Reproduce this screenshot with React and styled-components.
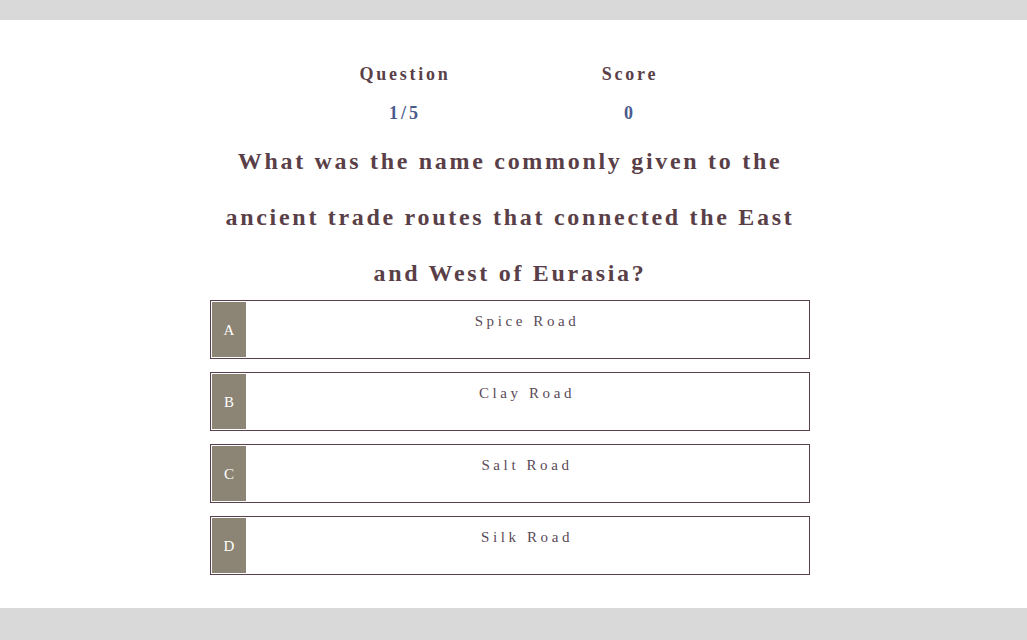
import styled, { createGlobalStyle } from "styled-components";

const questions = [
  {
    text: "What was the name commonly given to the ancient trade routes that connected the East and West of Eurasia?",
    options: ["Spice Road", "Clay Road", "Salt Road", "Silk Road"],
  },
];

const letters = ["A", "B", "C", "D"];

const App = () => {
  const current = questions[0];

  return (
    <>
      <GlobalStyle />
      <Page>
        <Panel>
          <Stats>
            <Stat>
              <StatLabel>Question</StatLabel>
              <StatValue>1/5</StatValue>
            </Stat>
            <Stat>
              <StatLabel>Score</StatLabel>
              <StatValue>0</StatValue>
            </Stat>
          </Stats>
          <Question>{current.text}</Question>
          <Options>
            {current.options.map((option, i) => (
              <Option key={option}>
                <Letter>{letters[i]}</Letter>
                <OptionText>{option}</OptionText>
              </Option>
            ))}
          </Options>
        </Panel>
      </Page>
    </>
  );
};

export default App;

const GlobalStyle = createGlobalStyle`
  body {
    margin: 0;
    background: #d9d9d9;
    font-family: "Liberation Serif", "Times New Roman", serif;
  }
`;

const Page = styled.div`
  height: 640px;
  padding: 20px 0 32px;
  box-sizing: border-box;
`;

const Panel = styled.div`
  background: #ffffff;
  height: 100%;
  display: flex;
  flex-direction: column;
  align-items: center;
  padding: 43px 7px 0 0;
  box-sizing: border-box;
`;

const Stats = styled.div`
  display: flex;
  gap: 75px;
  margin-left: 15px;
`;

const Stat = styled.div`
  width: 150px;
  display: flex;
  flex-direction: column;
  align-items: center;
  gap: 17px;
`;

const StatLabel = styled.div`
  font-size: 18px;
  font-weight: bold;
  letter-spacing: 2.75px;
  color: #5a3f48;
  line-height: 22px;
`;

const StatValue = styled.div`
  font-size: 18px;
  font-weight: bold;
  letter-spacing: 3px;
  color: #4a5b8c;
  line-height: 22px;
`;

const Question = styled.h1`
  width: 600px;
  margin: 9px 0 0;
  text-align: center;
  font-size: 24px;
  font-weight: bold;
  letter-spacing: 2.7px;
  line-height: 56px;
  color: #5a3f48;
`;

const Options = styled.div`
  display: flex;
  flex-direction: column;
  gap: 13px;
  margin-top: -1px;
`;

const Option = styled.div`
  width: 600px;
  height: 59px;
  box-sizing: border-box;
  border: 1px solid #5a3f4f;
  padding: 1px;
  display: flex;
`;

const Letter = styled.div`
  width: 34px;
  padding-top: 2px;
  background: #8c8474;
  color: #ffffff;
  font-size: 15px;
  display: flex;
  align-items: center;
  justify-content: center;
`;

const OptionText = styled.div`
  flex: 1;
  text-align: center;
  padding-top: 11px;
  font-size: 15px;
  letter-spacing: 3.6px;
  color: #5a4a58;
`;
